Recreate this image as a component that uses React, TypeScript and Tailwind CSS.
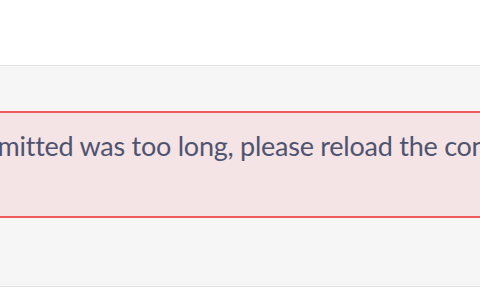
export default function App() {
  return (
    <div className="w-[480px] h-[300px] bg-white overflow-hidden font-['Lato',sans-serif]">
      <div className="mt-[65px] h-[222px] bg-[#f6f6f6] border-y border-[#e6e6e6] pt-[45px]">
        <div className="h-[107px] bg-[#f5e4e5] border-y-2 border-[#ee5a5e] flex justify-center pt-[16px] pr-[24px]">
          <p className="whitespace-nowrap text-[27px] leading-[34px] tracking-[-0.25px] text-[#50536f]">
            The content you submitted was too long, please reload the content and try again.
          </p>
        </div>
      </div>
    </div>
  );
}
